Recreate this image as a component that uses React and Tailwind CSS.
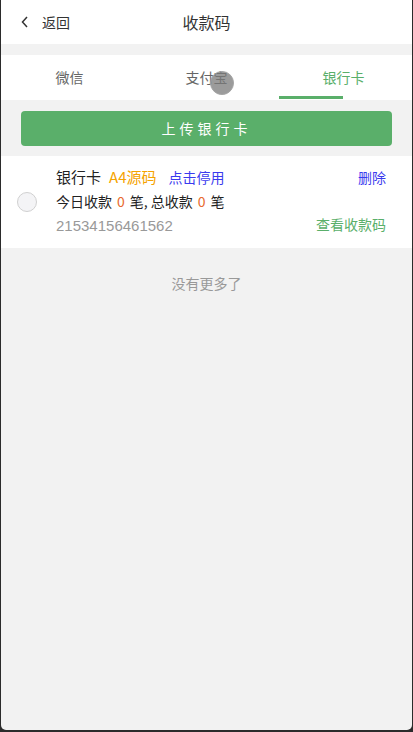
import React, { useState } from "react";

function App() {
  const [tab, setTab] = useState(2);
  const tabs = ["微信", "支付宝", "银行卡"];

  return (
    <div
      className="w-[413px] h-[732px] bg-[#2b2b2b] pl-[1px] pr-[1px] pb-[2px]"
      style={{ fontFamily: '"Noto Sans CJK SC", "Liberation Sans", sans-serif' }}
    >
      <div className="relative h-full bg-[#f2f2f2] rounded-b-[5px] overflow-hidden flex flex-col">

        {/* HEADER */}
        <div className="h-[44px] bg-white flex items-center relative shrink-0">
          <div className="flex items-center pl-[19px]">
            <svg width="10" height="14" viewBox="0 0 10 14" className="mr-[12px]">
              <path d="M7 2 L2.5 7 L7 12" stroke="#333" strokeWidth="1.5" fill="none" />
            </svg>
            <span className="text-[14px] text-[#333]">返回</span>
          </div>
          <div className="absolute left-0 right-0 text-center text-[16px] text-[#333] pointer-events-none">
            收款码
          </div>
        </div>

        {/* TABS */}
        <div className="mt-[11px] h-[45px] bg-white flex relative shrink-0">
          {tabs.map((t, i) => (
            <div
              key={t}
              onClick={() => setTab(i)}
              className={
                i === tab
                  ? "flex-1 flex items-center justify-center text-[14px] text-[#5aaf6a]"
                  : "flex-1 flex items-center justify-center text-[14px] text-[#666]"
              }
            >
              {t}
            </div>
          ))}
          <div className="absolute bottom-[1px] left-[278px] w-[64px] h-[3px] bg-[#5aaf6a]" />
          {/* touch indicator */}
          <div className="absolute left-[209px] top-[16px] w-[24px] h-[24px] rounded-full bg-[#7a7a7a]/75 border border-[#a5a5a5]" />
        </div>

        {/* UPLOAD */}
        <div className="px-[20px] pt-[11px] pb-[10px] shrink-0">
          <button className="w-full h-[35px] rounded-[4px] bg-[#5aaf6a] text-white text-[14px] tracking-[4px]">
            上传银行卡
          </button>
        </div>

        {/* CARD */}
        <div className="bg-white h-[92px] flex items-center shrink-0">
          <div className="w-[20px] h-[20px] rounded-full border border-[#d0d0d0] bg-[#f4f4f6] ml-[16px] mr-[19px]" />
          <div className="flex-1 pr-[26px]">
            <div className="flex items-center justify-between h-[24px]">
              <div className="flex items-baseline">
                <span className="text-[15px] text-[#222]">银行卡</span>
                <span className="text-[15px] text-[#f5a300] ml-[8px]">A4源码</span>
                <span className="text-[14px] text-[#3a3aee] ml-[12px]">点击停用</span>
              </div>
              <span className="text-[14px] text-[#3a3aee]">删除</span>
            </div>
            <div className="text-[14px] text-[#222] h-[24px] flex items-center">
              今日收款<span className="text-[#e8692e] mx-[5px]">0</span>笔, 总收款<span className="text-[#e8692e] mx-[5px]">0</span>笔
            </div>
            <div className="flex items-center justify-between h-[26px]">
              <span className="text-[15px] text-[#999]" style={{ fontFamily: '"Liberation Sans", sans-serif' }}>21534156461562</span>
              <span className="text-[14px] text-[#5aaf6a] -mt-[4px]">查看收款码</span>
            </div>
          </div>
        </div>

        <div className="text-center text-[14px] text-[#999] mt-[25px]">没有更多了</div>
      </div>
    </div>
  );
}

export default App;
